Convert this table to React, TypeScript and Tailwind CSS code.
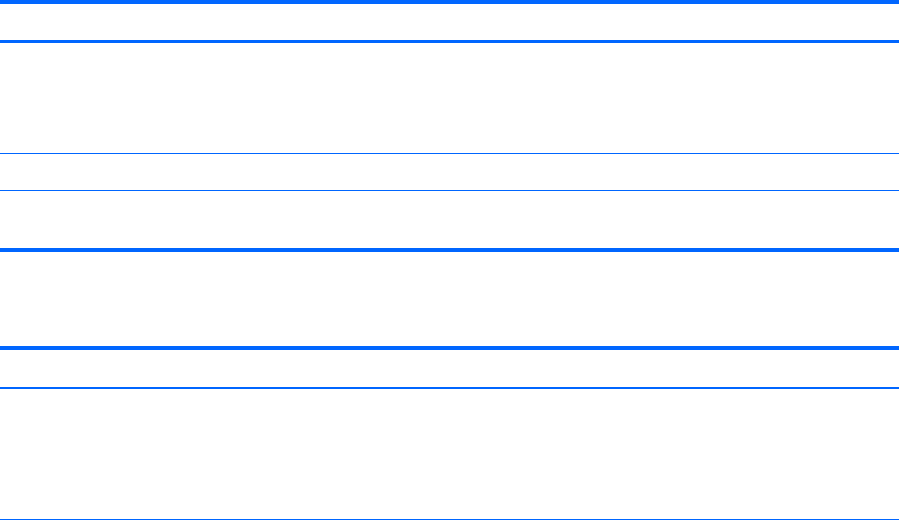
// heights include the bottom rule (border-box)
const rows = [
  { h: "h-[39px]", b: "border-b-[3px]" },
  { h: "h-[111px]", b: "border-b" },
  { h: "h-[37px]", b: "border-b" },
  { h: "h-[61px]", b: "border-b-4" },
  { h: "h-[98px]", b: "border-b-4" },
  { h: "h-[39px]", b: "border-b-2" },
  { h: "h-[131px]", b: "border-b" },
];

export default function App() {
  return (
    <div className="w-[900px] h-[520px] bg-white overflow-hidden">
      <div className="w-[899px] flex flex-col">
        <div className="h-[4px] bg-[#0066ff]" />
        {rows.map((r, i) => (
          <div key={i} className={`${r.h} ${r.b} border-solid border-b-[#0066ff]`} />
        ))}
      </div>
    </div>
  );
}
